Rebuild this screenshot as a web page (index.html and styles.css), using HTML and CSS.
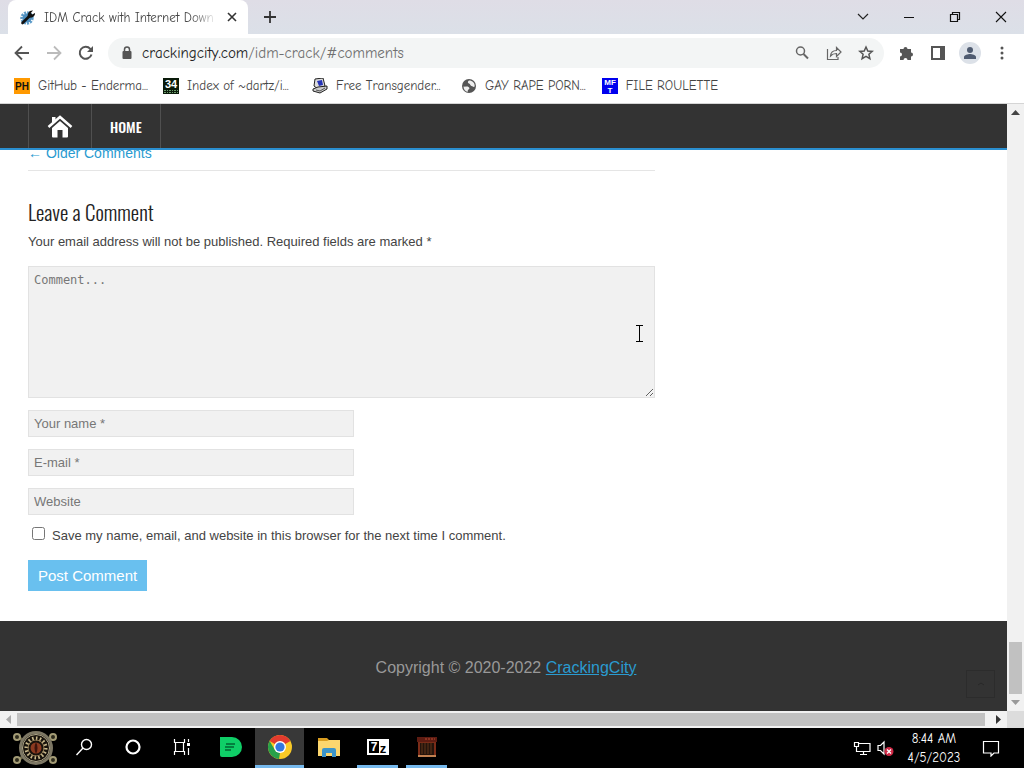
FILE: index.html
```html
<!DOCTYPE html>
<html lang="en">
<head>
<meta charset="utf-8">
<title>IDM Crack with Internet Download Manager</title>
<link rel="stylesheet" href="styles.css">
</head>
<body>
<header class="browser">
  <div class="tabstrip">
    <div class="tab">
      <svg class="icon16" viewBox="0 0 16 16"><circle cx="7" cy="9" r="5.2" fill="none" stroke="#5e9cc9" stroke-width="3" stroke-dasharray="2 1"/><circle cx="7" cy="9" r="4.6" fill="#4e8fc0"/><path d="M2.500 14 9 7.500" stroke="#111" stroke-width="2.600" stroke-linecap="round"/><path d="M8 8C7 5 9 1 13 1.500L10.800 4l1.400 1.600L15 4c.3 3-2.500 5.300-5.500 4.500z" fill="#111"/></svg>
      <span class="tab-title">IDM Crack with Internet Down</span>
      <button class="plain tab-close" aria-label="Close tab"><svg class="icon12" viewBox="0 0 12 12"><path d="m2 2 8 8M10 2l-8 8" stroke="#333" stroke-width="1.600"/></svg></button>
    </div>
    <button class="plain new-tab" aria-label="New tab"><svg class="icon14" viewBox="0 0 14 14"><path d="M7 1v12M1 7h12" stroke="#333" stroke-width="1.800"/></svg></button>
    <div class="window-buttons">
      <button class="plain" aria-label="Search tabs"><svg class="icon12" viewBox="0 0 12 12"><path d="m1 3 5 5 5-5" fill="none" stroke="#222" stroke-width="1.200"/></svg></button>
      <button class="plain" aria-label="Minimize"><svg class="icon12" viewBox="0 0 12 12"><path d="M1 6.500h10" stroke="#111"/></svg></button>
      <button class="plain" aria-label="Restore"><svg class="icon12" viewBox="0 0 12 12"><path d="M1.500 3.500h7v7h-7zM3.500 3V1.500h7v7H9" fill="none" stroke="#111" stroke-width="1.200"/></svg></button>
      <button class="plain" aria-label="Close"><svg class="icon12" viewBox="0 0 12 12"><path d="m1 1 10 10M11 1 1 11" stroke="#111" stroke-width="1.100"/></svg></button>
    </div>
  </div>
  <div class="toolbar">
    <button class="plain tool" aria-label="Back"><svg class="icon16" viewBox="0 0 16 16"><path d="M15 8H2M8 1.500 1.500 8 8 14.500" fill="none" stroke="#555" stroke-width="1.800"/></svg></button>
    <button class="plain tool" aria-label="Forward"><svg class="icon16" viewBox="0 0 16 16"><path d="M1 8h13M8 1.500 14.500 8 8 14.500" fill="none" stroke="#bbb" stroke-width="1.800"/></svg></button>
    <button class="plain tool" aria-label="Reload"><svg class="icon16" viewBox="0 0 16 16"><path d="M13.500 9.500A6 6 0 1 1 12.300 3.800L14 5.500" fill="none" stroke="#555" stroke-width="2"/><path d="M15 1v6H9z" fill="#555"/></svg></button>
    <div class="omnibox">
      <svg class="icon14" viewBox="0 0 14 14"><rect x="2.500" y="5" width="9" height="8" rx="1" fill="#555"/><path d="M4.500 6V3.500a2.500 2.500 0 0 1 5 0V6" fill="none" stroke="#555" stroke-width="1.500"/></svg>
      <span class="url">crackingcity.com<span class="path">/idm-crack/#comments</span></span>
      <button class="plain tool" aria-label="Zoom"><svg class="icon16" viewBox="0 0 16 16"><circle cx="6.500" cy="6" r="4" fill="none" stroke="#666" stroke-width="1.500"/><path d="m9.500 9 4.500 4.500" stroke="#666" stroke-width="2"/></svg></button>
      <button class="plain tool" aria-label="Share"><svg class="icon16" viewBox="0 0 16 16"><path d="M1.500 4v10.500H12V12M4.500 11c.3-4 2.500-5.500 6-5.500V2.500L15 7l-4.500 4.500v-3C7.500 8.500 6 9.200 4.500 11z" fill="none" stroke="#666" stroke-width="1.200"/></svg></button>
      <button class="plain tool" aria-label="Bookmark"><svg class="icon16" viewBox="0 0 16 16"><path d="m8 2 1.800 4 4.400.4-3.300 2.900 1 4.300L8 11.300l-3.900 2.300 1-4.300-3.300-2.900 4.400-.4z" fill="none" stroke="#555" stroke-width="1.500"/></svg></button>
    </div>
    <div class="actions">
      <button class="plain tool" aria-label="Extensions"><svg class="icon16" viewBox="0 0 16 16"><path d="M2 4h3.500a2 2 0 1 1 4 0H13v3.500a2 2 0 1 1 0 4V15H9.500a2 2 0 1 0-4 0H2v-3.500a2 2 0 1 0 0-4z" fill="#555"/></svg></button>
      <button class="plain tool" aria-label="Side panel"><svg class="icon16" viewBox="0 0 16 16"><path d="M1 1h14v14H1z" fill="#555"/><path d="M3 3h7v10H3z" fill="#fff"/></svg></button>
      <button class="plain tool profile" aria-label="Profile"><svg class="icon14" viewBox="0 0 14 14"><circle cx="7" cy="4" r="3" fill="#4f5b70"/><path d="M1 13v-2c0-2 4-3 6-3s6 1 6 3v2z" fill="#4f5b70"/></svg></button>
      <button class="plain tool" aria-label="Menu"><svg class="icon16" viewBox="0 0 16 16"><g fill="#555"><circle cx="8" cy="3" r="1.500"/><circle cx="8" cy="8" r="1.500"/><circle cx="8" cy="13" r="1.500"/></g></svg></button>
    </div>
  </div>
  <nav class="bookmarks" aria-label="Bookmarks">
    <a href="#"><svg class="icon16" viewBox="0 0 16 16"><path d="M0 0h16v16H0z" fill="#f90"/><text x="8" y="12" class="mark ph">PH</text></svg>GitHub - Enderma...</a>
    <a href="#"><svg class="icon16" viewBox="0 0 16 16"><path d="M0 0h16v16H0z" fill="#0a1a0a"/><text x="8" y="10" class="mark num">34</text><path d="M1 12.500h14M1 14.500h14" stroke="#6a9a6a" stroke-dasharray="2 1 1 1"/></svg>Index of ~dartz/i...</a>
    <a href="#"><svg class="icon16" viewBox="0 0 16 16"><path d="m3 1 8-1 2 8-7 3-4-3z" fill="#ddd" stroke="#222"/><path d="m5 3 5-1 1 5-4 1z" fill="#2634b8"/><path d="m1 11 5-2 9-1v3l-7 4-7-2z" fill="#ccc" stroke="#222"/><path d="m4 12 4 1 5-3" fill="none" stroke="#555"/></svg>Free Transgender...</a>
    <a href="#"><svg class="icon16" viewBox="0 0 16 16"><circle cx="8" cy="8" r="7" fill="#555"/><path d="M2.500 8.500c2 .5 3.500-.5 5 .5s1 2 0 2.500-.5 1.500-1 2.500c-2-.5-4-2.500-4-5.500zM8 2.500c-1.500 1-1.500 2.500 0 3s1 2 2.500 2.500 2 1.500 3.200.5C14 5 11.500 2.500 8 2.500z" fill="#eee"/></svg>GAY RAPE PORN...</a>
    <a href="#"><svg class="icon16" viewBox="0 0 16 16"><path d="M0 0h16v16H0z" fill="#00e"/><text x="8" y="7" class="mark mft">MF</text><text x="8" y="15" class="mark mft">T</text></svg>FILE ROULETTE</a>
  </nav>
</header>

<div class="viewport">
  <div class="page">
    <nav class="site-nav">
      <a class="home-icon" href="#" aria-label="Homepage"><svg class="icon26" viewBox="0 0 26 26"><path d="M5 15 13 8l8 7v8.500a1 1 0 0 1-1 1h-4.500V17h-5v7.500H6a1 1 0 0 1-1-1z" fill="#fff"/><path d="M1.500 14 13 4l11.500 10" fill="none" stroke="#fff" stroke-width="2.500"/><path d="M5 4h3.500v3L5 10z" fill="#fff"/></svg></a>
      <a href="#">HOME</a>
    </nav>
    <main class="content">
      <div class="older"><a href="#">← Older Comments</a></div>
      <form class="comment-form">
        <h2>Leave a Comment</h2>
        <p>Your email address will not be published. Required fields are marked *</p>
        <div class="comment-box">
          <textarea aria-label="Comment" placeholder="Comment..."></textarea>
          <svg class="cursor" viewBox="0 0 9 17"><path d="M1 .5h7M1 16.500h7M4.500 1v15" stroke="#000"/></svg>
        </div>
        <input class="field" type="text" aria-label="Your name" placeholder="Your name *">
        <input class="field" type="email" aria-label="E-mail" placeholder="E-mail *">
        <input class="field" type="url" aria-label="Website" placeholder="Website">
        <label class="save"><input type="checkbox">Save my name, email, and website in this browser for the next time I comment.</label>
        <button class="post" type="submit">Post Comment</button>
      </form>
    </main>
    <footer class="site-footer">
      <span>Copyright © 2020-2022 <a href="#">CrackingCity</a></span>
      <button class="plain to-top" aria-label="Back to top"><svg class="icon12" viewBox="0 0 12 12"><path d="m3 7 3-2 3 2" fill="none" stroke="#282828"/></svg></button>
    </footer>
  </div>
  <div class="vscroll">
    <svg class="arrow" viewBox="0 0 9 9"><path d="m0 7 4.500-5L9 7z" fill="#444"/></svg>
    <div class="vtrack"><div class="vthumb"></div></div>
    <svg class="arrow" viewBox="0 0 9 9"><path d="m0 2 4.500 5L9 2z" fill="#999"/></svg>
  </div>
  <div class="hscroll">
    <svg class="arrow" viewBox="0 0 9 9"><path d="M7 0 2 4.500 7 9z" fill="#aaa"/></svg>
    <div class="hthumb"></div>
    <svg class="arrow" viewBox="0 0 9 9"><path d="m2 0 5 4.500L2 9z" fill="#333"/></svg>
  </div>
  <div class="corner"></div>
</div>

<footer class="taskbar">
  <button class="plain start" aria-label="Start"><svg class="start-icon" viewBox="0 0 48 40"><path d="m7 9 34 23M41 9 7 32" stroke="#6d6748" stroke-width="3"/><g fill="#2d2a1c" stroke="#a39b75" stroke-width="2"><circle cx="6" cy="9" r="3"/><circle cx="42" cy="9" r="3"/><circle cx="6" cy="32" r="3"/><circle cx="42" cy="32" r="3"/></g><circle cx="25" cy="20" r="15.500" fill="#17120c" stroke="#7d7764" stroke-width="3"/><circle cx="25" cy="20" r="13.500" fill="none" stroke="#b3aa8c"/><circle cx="25" cy="20" r="9.500" fill="none" stroke="#c9b98c" stroke-width="4" stroke-dasharray="1.500 2.200"/><circle cx="25" cy="20" r="8" fill="none" stroke="#8c7550"/><circle cx="25" cy="20" r="5.500" fill="#8c3a20"/><path d="M25 14c2 4 2 8 0 12-2-4-2-8 0-12z" fill="#3d140c"/></svg></button>
  <button class="plain task" aria-label="Search"><svg class="icon18" viewBox="0 0 18 18"><circle cx="11.500" cy="6.500" r="5" fill="none" stroke="#fff" stroke-width="1.400"/><path d="m8 10-6.500 7" stroke="#fff" stroke-width="1.400"/></svg></button>
  <button class="plain task" aria-label="Cortana"><svg class="icon18" viewBox="0 0 18 18"><circle cx="9" cy="9" r="6.500" fill="none" stroke="#fff" stroke-width="2.200"/></svg></button>
  <button class="plain task" aria-label="Task view"><svg class="icon18" viewBox="0 0 18 18"><path d="M1.500 1v3.500h10V1M1.500 17v-3.500h10V17M2.500 4.500v9M10.500 4.500v9M15.500 1v3M15.500 10v7" fill="none" stroke="#fff" stroke-width="1.200"/><path d="M14 5h3v3h-3z" fill="#fff"/></svg></button>
  <button class="plain task" aria-label="Notes"><svg class="icon22" viewBox="0 0 22 22"><path d="M0 1h12a10 10 0 0 1 0 20H2a2 2 0 0 1-2-2z" fill="#0fce67"/><path d="M6 8h9M5 11h9M5 14h6" stroke="#063" stroke-width="1.400"/></svg></button>
  <button class="plain task open active" aria-label="Chrome"><svg class="icon26" viewBox="0 0 26 26"><circle cx="13" cy="13" r="12" fill="#f9c927"/><path d="M13 13 2.600 7A12 12 0 0 1 23.400 7z" fill="#e33b2e"/><path d="M2.600 7 8 16l5 3-1 6A12 12 0 0 1 2.600 7z" fill="#27a04a"/><circle cx="13" cy="13" r="6" fill="#fff"/><circle cx="13" cy="13" r="4.600" fill="#3378e0"/></svg></button>
  <button class="plain task" aria-label="File Explorer"><svg class="icon22" viewBox="0 0 22 22"><path d="M0 2h9l2 2h11v16H0z" fill="#d99d20"/><path d="M0 5h9l2-1h11v16H0z" fill="#fbd66e"/><path d="M4 21v-7a2 2 0 0 1 2-2h10a2 2 0 0 1 2 2v7h-4v-4H8v4z" fill="#3b94c9"/></svg></button>
  <button class="plain task open" aria-label="7-Zip"><svg class="icon22" viewBox="0 0 22 22"><path d="M0 3h22v16H0z" fill="#fff"/><path d="M2 5h10v12H2z" fill="#000"/><text x="7" y="15" class="mark seven">7</text><text x="16" y="17" class="mark zed">z</text></svg></button>
  <button class="plain task open" aria-label="Cabinet"><svg class="icon22" viewBox="0 0 22 22"><path d="M1 1h20v5H1z" fill="#5e1c12"/><path d="M2 6h18v14H2z" fill="#7a2c18"/><path d="M4 7h14v12H4z" fill="#24140c"/><path d="M6 7v11M9 7v11M12 7v11M15 7v11" stroke="#5e3519"/><path d="M2 20h18" stroke="#c08050" stroke-width="2"/><path d="M9 3h10" stroke="#b64b30" stroke-dasharray="2 1"/></svg></button>
  <div class="tray">
    <svg class="icon18" viewBox="0 0 18 18"><path d="M6 4.500h11v8H3.500V9M10.500 13v3M7 15.500h7M1.500 3.500h4v4h-4zM3.500 8v4" fill="none" stroke="#fff" stroke-width="1.200"/></svg>
    <svg class="icon18" viewBox="0 0 18 18"><path d="M2 6.500h2.500L8 3v12l-3.500-3.500H2z" fill="none" stroke="#fff" stroke-width="1.200"/><circle cx="13" cy="12.500" r="4.500" fill="#cf2946"/><path d="m11 10.500 4 4M15 10.500l-4 4" stroke="#fff" stroke-width="1.300"/></svg>
    <div class="clock"><span>8:44 AM</span><span>4/5/2023</span></div>
    <svg class="icon18" viewBox="0 0 18 18"><path d="M1.500 2.500h15v11.500H12l-3 3v-3H1.500z" fill="none" stroke="#fff" stroke-width="1.200"/></svg>
  </div>
</footer>
</body>
</html>
```
FILE: styles.css
```css
* { box-sizing: border-box; }

body {
  margin: 0;
  min-height: 100vh;
  display: flex;
  flex-direction: column;
  font-family: "Liberation Sans", Arial, sans-serif;
  font-size: 13px;
  color: #444;
}

svg { display: block; flex: none; }
.icon12 { width: 12px; height: 12px; }
.icon14 { width: 14px; height: 14px; }
.icon16 { width: 16px; height: 16px; }
.icon18 { width: 18px; height: 18px; }
.icon22 { width: 22px; height: 22px; }
.icon26 { width: 26px; height: 26px; }

.plain {
  display: flex;
  align-items: center;
  justify-content: center;
  padding: 0;
  border: 0;
  background: none;
}

/* Browser chrome */
.browser {
  font-family: "Comic Sans MS", "Comic Neue", "Open Sans", sans-serif;
  font-size: 13px;
  color: #444;
  background: #fff;
  border-bottom: 1px solid #d5d5d5;
}

.tabstrip {
  display: flex;
  align-items: center;
  height: 34px;
  padding-left: 8px;
  background: linear-gradient(#dfdde6, #dbe0e8);
}

.tab {
  display: flex;
  align-items: center;
  gap: 8px;
  width: 240px;
  height: 34px;
  padding: 0 10px 0 12px;
  background: #fff;
  border-radius: 8px 8px 0 0;
}

.tab-title {
  flex: 1;
  white-space: nowrap;
  mask-image: linear-gradient(to right, #000 84%, transparent);
}

.tab-close { width: 12px; height: 12px; }
.new-tab { width: 28px; height: 28px; margin-left: 8px; }
.window-buttons { display: flex; margin-left: auto; }
.window-buttons .plain { width: 46px; height: 30px; }

.toolbar {
  display: flex;
  align-items: center;
  height: 37px;
  padding: 0 6px;
}

.tool { width: 32px; height: 32px; }

.omnibox {
  flex: 1;
  display: flex;
  align-items: center;
  height: 30px;
  margin-left: 6px;
  padding: 0 2px 0 12px;
  border-radius: 15px;
  background: #f3f5f5;
}

.url { flex: 1; margin-left: 8px; font-size: 15px; color: #222; }
.path { color: #707070; }
.actions { display: flex; align-items: center; padding-left: 6px; }
.profile { width: 22px; height: 22px; margin: 0 5px; border-radius: 50%; background: #dce1e8; }

.bookmarks {
  display: flex;
  align-items: center;
  height: 32px;
  padding: 0 14px 3px;
  gap: 16px;
}

.bookmarks a {
  display: flex;
  align-items: center;
  gap: 8px;
  color: #444;
  text-decoration: none;
  white-space: nowrap;
}

.bookmarks a:nth-child(-n+3) { width: 133px; }

.mark { font-family: "Liberation Sans", Arial, sans-serif; text-anchor: middle; font-weight: bold; }
.ph { font-size: 10px; fill: #111; }
.num { font-size: 11px; fill: #fff; }
.mft { font-size: 8px; fill: #fff; }
.seven { font-size: 12px; fill: #fff; }
.zed { font-size: 13px; fill: #000; }

/* Page viewport with scrollbars */
.viewport {
  flex: 1;
  display: grid;
  grid-template-columns: 1fr 17px;
  grid-template-rows: 1fr 17px;
}

.page { display: flex; flex-direction: column; background: #fff; }

.site-nav {
  display: flex;
  position: relative;
  z-index: 1;
  height: 46px;
  padding-left: 28px;
  background: #333;
  border-bottom: 2px solid #2a8fd0;
}

.site-nav a {
  display: flex;
  align-items: center;
  padding: 0 18px;
  border-right: 1px solid #505050;
  font-family: Oswald, "Liberation Sans Narrow", "Arial Narrow", sans-serif;
  font-size: 14px;
  font-weight: 500;
  color: #fff;
  text-decoration: none;
}

.site-nav .home-icon { border-left: 1px solid #505050; }

.content { flex: 1; width: 65%; padding-left: 28px; }

.older {
  margin-top: -8px;
  padding-bottom: 6px;
  border-bottom: 1px solid #e5e5e5;
  font-size: 14px;
  line-height: 22px;
}

a { color: #2a9bd0; }
.older a { text-decoration: none; }

.comment-form { display: flex; flex-direction: column; align-items: flex-start; }

h2 {
  margin: 25px 0 0;
  font-family: Oswald, "Liberation Sans Narrow", "Arial Narrow", sans-serif;
  font-size: 21px;
  font-weight: 300;
  line-height: 32px;
  color: #222;
}

p { margin: 4px 0 14px; line-height: 20px; }

.comment-box { position: relative; width: 100%; margin-bottom: 12px; }

textarea, .field {
  display: block;
  border: 1px solid #e2e2e2;
  background: #f1f1f1;
  padding: 5px;
  font-size: 13px;
}

textarea {
  width: 100%;
  height: 132px;
  padding-top: 6px;
  font-family: "DejaVu Sans Mono", monospace;
  font-size: 12px;
}

.field {
  width: 52%;
  height: 27px;
  margin-bottom: 12px;
  font-family: inherit;
}

::placeholder { color: #777; }

.cursor { position: absolute; right: 11px; top: 59px; width: 9px; height: 17px; }

.save { display: flex; align-items: center; gap: 7px; line-height: 17px; }
.save input { width: 13px; height: 13px; margin: 0 0 4px 4px; }

.post {
  height: 31px;
  margin: 16px 0 30px;
  padding: 0 10px;
  border: 0;
  background: #69c0ef;
  font-family: inherit;
  font-size: 15px;
  color: #fff;
}

.site-footer {
  position: relative;
  display: flex;
  align-items: center;
  justify-content: center;
  height: 90px;
  padding: 3px 0 0 5px;
  background: #333;
  color: #999;
  font-size: 16px;
}

.to-top {
  position: absolute;
  right: 12px;
  bottom: 13px;
  width: 29px;
  height: 28px;
  border: 1px solid #2c2c2c;
}

.vscroll, .hscroll { display: flex; align-items: center; background: #f1f1f1; }
.vscroll { flex-direction: column; padding: 4px 0; }
.hscroll { padding: 0 4px; gap: 4px; }
.arrow { width: 9px; height: 9px; }
.vtrack { flex: 1; display: flex; align-items: flex-end; padding-bottom: 4px; }
.vthumb { width: 13px; height: 52px; background: #c1c1c1; }
.hthumb { flex: 1; height: 13px; margin-right: 5px; background: #c1c1c1; }
.corner { background: #dcdcdc; }

/* Taskbar */
.taskbar { display: flex; height: 40px; background: #000; }
.start { width: 59px; padding-left: 10px; }
.start-icon { width: 48px; height: 40px; }
.task { width: 49px; height: 40px; border-bottom: 3px solid transparent; }
.task.open { width: 41px; margin: 0 4px; border-bottom-color: #76b9ed; }
.task.active { width: 49px; margin: 0; background: #383838; }

.tray {
  display: flex;
  align-items: center;
  gap: 5px;
  margin-left: auto;
  padding-right: 24px;
}

.clock {
  display: flex;
  flex-direction: column;
  width: 66px;
  margin: 0 10px 0 2px;
  font-family: "Comic Sans MS", "Comic Neue", "Open Sans", sans-serif;
  font-size: 13px;
  line-height: 19px;
  text-align: center;
  color: #fff;
}
```
